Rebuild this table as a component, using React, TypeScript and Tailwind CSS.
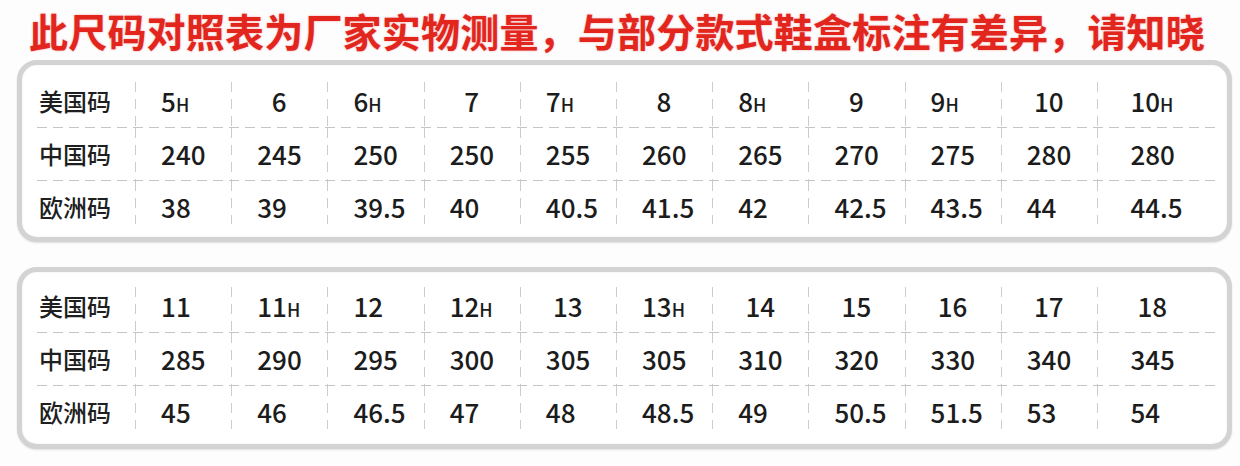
import React from "react";

type Cell = { v: string; h?: boolean; c?: boolean };

const colBg =
  "bg-[repeating-linear-gradient(to_bottom,#cccccc_0_10px,transparent_10px_17px)] bg-no-repeat";

const panels: { us: Cell[]; cn: string[]; eu: string[]; pt: string }[] = [
  {
    us: [
      { v: "5", h: true },
      { v: "6", c: true },
      { v: "6", h: true },
      { v: "7", c: true },
      { v: "7", h: true },
      { v: "8", c: true },
      { v: "8", h: true },
      { v: "9", c: true },
      { v: "9", h: true },
      { v: "10", c: true },
      { v: "10", h: true },
    ],
    cn: ["240", "245", "250", "250", "255", "260", "265", "270", "275", "280", "280"],
    eu: ["38", "39", "39.5", "40", "40.5", "41.5", "42", "42.5", "43.5", "44", "44.5"],
    pt: "pt-[10px]",
  },
  {
    us: [
      { v: "11" },
      { v: "11", h: true },
      { v: "12" },
      { v: "12", h: true },
      { v: "13", c: true },
      { v: "13", h: true },
      { v: "14", c: true },
      { v: "15", c: true },
      { v: "16", c: true },
      { v: "17", c: true },
      { v: "18", c: true },
    ],
    cn: ["285", "290", "295", "300", "305", "305", "310", "320", "330", "340", "345"],
    eu: ["45", "46", "46.5", "47", "48", "48.5", "49", "50.5", "51.5", "53", "54"],
    pt: "pt-[8px]",
  },
];

const HLine = () => (
  <div className="h-px w-full bg-[repeating-linear-gradient(to_right,#c4c4c4_0_10px,transparent_10px_16px)]" />
);

function Row({
  label,
  cells,
  kind,
}: {
  label: string;
  cells: Cell[];
  kind: "top" | "mid" | "bot";
}) {
  const bgPos =
    kind === "top"
      ? "bg-position-[0_7px] bg-size-[1px_100%]"
      : kind === "bot"
      ? "bg-position-[0_0] bg-size-[1px_43px]"
      : "bg-position-[0_0] bg-size-[1px_100%]";
  return (
    <div className="grid h-[52px] grid-cols-[98px_repeat(10,96.2px)_111px_1fr]">
      <div className="flex items-center pl-[2px] text-[24px] font-medium text-[#1f1f1f]">
        {label}
      </div>
      {cells.map((c, i) => (
        <div key={i} className={`flex h-full items-center justify-center ${colBg} ${bgPos}`}>
          <span
            className={`inline-block w-[44px] whitespace-nowrap text-[26px] font-medium text-[#1c1c1c] ${
              c.c ? "text-center" : "text-left"
            }`}
          >
            {c.v}
            {c.h && <span className="text-[18px]">H</span>}
          </span>
        </div>
      ))}
      <div />
    </div>
  );
}

export default function App() {
  return (
    <div
      className="h-[466px] w-[1240px] overflow-hidden bg-[#fdfdfd] leading-none"
      style={{ fontFamily: '"Noto Sans CJK SC", "Noto Sans", sans-serif' }}
    >
      <div className="pl-[29px] pt-[11px] text-[39px] font-bold leading-[39px] tracking-[0.2px] text-[#e2261e] [text-shadow:0_0_2px_rgba(226,38,30,0.45)]">
        此尺码对照表为厂家实物测量，与部分款式鞋盒标注有差异，请知晓
      </div>
      <div className="mt-[10px] flex flex-col gap-[25px] pl-[17px]">
        {panels.map((p, idx) => (
          <div
            key={idx}
            className={`h-[182px] w-[1215px] rounded-[20px] border-[5px] border-[#d3d3d3] bg-white pl-[15px] pr-[7px] shadow-[0_1px_2px_rgba(0,0,0,0.12),inset_0_0_2px_rgba(0,0,0,0.08)] ${p.pt}`}
          >
            <Row label="美国码" cells={p.us} kind="top" />
            <HLine />
            <Row label="中国码" cells={p.cn.map((v) => ({ v }))} kind="mid" />
            <HLine />
            <Row label="欧洲码" cells={p.eu.map((v) => ({ v }))} kind="bot" />
          </div>
        ))}
      </div>
    </div>
  );
}
